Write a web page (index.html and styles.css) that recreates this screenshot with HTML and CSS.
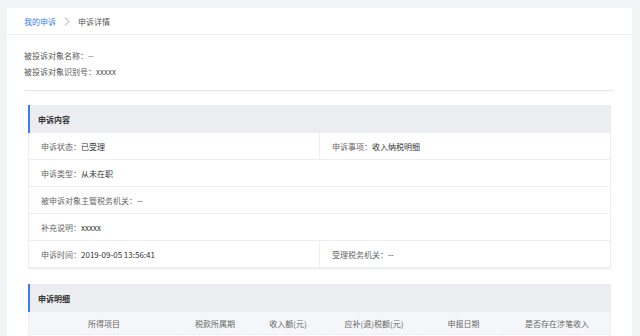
FILE: index.html
```html
<!DOCTYPE html>
<html lang="zh">
<head>
<meta charset="utf-8">
<title>申诉详情</title>
<link rel="stylesheet" href="styles.css">
</head>
<body>
<div class="card">
  <div class="crumb">
    <span class="crumb-link">我的申诉</span>
    <svg class="crumb-sep" width="6" height="9" viewBox="0 0 6 9"><path d="M1 0.5 L5 4.5 L1 8.5" fill="none" stroke="#999" stroke-width="0.9"/></svg>
    <span class="crumb-cur">申诉详情</span>
  </div>
  <div class="content">
    <div class="info">
      <div class="info-line">被投诉对象名称：--</div>
      <div class="info-line">被投诉对象识别号：xxxxx</div>
    </div>
    <div class="divider"></div>
    <div class="section">
      <div class="sec-head">申诉内容</div>
      <div class="row two">
        <div class="cell"><span class="lbl">申诉状态：</span><span class="val">已受理</span></div>
        <div class="cell"><span class="lbl">申诉事项：</span><span class="val">收入纳税明细</span></div>
      </div>
      <div class="row"><div class="cell"><span class="lbl">申诉类型：</span><span class="val">从未在职</span></div></div>
      <div class="row"><div class="cell"><span class="lbl">被申诉对象主管税务机关：</span><span class="val">--</span></div></div>
      <div class="row"><div class="cell"><span class="lbl">补充说明：</span><span class="val">xxxxx</span></div></div>
      <div class="row two">
        <div class="cell"><span class="lbl">申诉时间：</span><span class="val">2019-09-05 13:56:41</span></div>
        <div class="cell"><span class="lbl">受理税务机关：</span><span class="val">--</span></div>
      </div>
    </div>
    <div class="section sec2">
      <div class="sec-head">申诉明细</div>
      <div class="thead">
        <div class="th c1">所得项目</div>
        <div class="th c2">税款所属期</div>
        <div class="th c3">收入额(元)</div>
        <div class="th c4">应补(退)税额(元)</div>
        <div class="th c5">申报日期</div>
        <div class="th c6">是否存在涉笔收入</div>
      </div>
      <div class="tbody">
        <div class="td c1"></div>
        <div class="td c2"></div>
        <div class="td c3"></div>
        <div class="td c4"></div>
        <div class="td c5"></div>
        <div class="td c6"></div>
      </div>
    </div>
  </div>
</div>
</body>
</html>
```

FILE: styles.css
```css
html {
  margin: 0;
  padding: 0;
  height: 336px;
  overflow: hidden;
}
body {
  margin: 0;
  background: #f2f3f7;
  font-family: "Noto Sans CJK SC", "Noto Sans", sans-serif;
  font-size: 8px;
  color: #333;
  padding: 8px 8px 0 7px;
  height: 336px;
  box-sizing: border-box;
  overflow: hidden;
}
.card {
  background: #fff;
  height: 100%;
  overflow: hidden;
}
.crumb {
  height: 27px;
  border-bottom: 1px solid #ebedf0;
  display: flex;
  align-items: center;
  padding-left: 17px;
  box-sizing: border-box;
}
.crumb-link { color: #3e7bf5; }
.crumb-sep {
  margin: 0 8px 0 8px;
}
.crumb-cur { color: #555; }
.content {
  padding: 0 18px 0 17px;
}
.info {
  padding-top: 13px;
}
.info-line {
  line-height: 16px;
  color: #555;
}
.divider {
  height: 1px;
  background: #e4e6ea;
  margin-top: 10px;
}
.section {
  margin: 14px 3px 0 4px;
  border: 1px solid #eceef1;
  border-top: none;
  box-shadow: 0 1px 2px rgba(0,0,0,0.03);
}
.sec2 { margin-top: 15px; }
.sec-head {
  height: 28px;
  background: #ebedf1;
  border-left: 2px solid #3e7bf5;
  margin-left: -1px;
  display: flex;
  align-items: center;
  padding-left: 8px;
  font-weight: bold;
  color: #333;
}
.row {
  display: flex;
  height: 27px;
  border-bottom: 1px solid #eceef1;
  box-sizing: border-box;
}
.row .cell {
  flex: 1;
  display: flex;
  align-items: center;
  padding-left: 12px;
}
.row.two .cell:first-child {
  border-right: 1px solid #eceef1;
}
.lbl { color: #666; }
.val { color: #333; }
.thead, .tbody {
  display: grid;
  grid-template-columns: 150px 72px 74px 98px 81px 1fr;
}
.thead {
  background: #f5f6f9;
  height: 22px;
}
.th {
  display: flex;
  align-items: center;
  justify-content: center;
  color: #666;
}
.tbody { height: 30px; }
.td {
  border-right: 1px solid #eceef1;
  border-top: 1px solid #eceef1;
}
.td.c6 { border-right: none; }
```
